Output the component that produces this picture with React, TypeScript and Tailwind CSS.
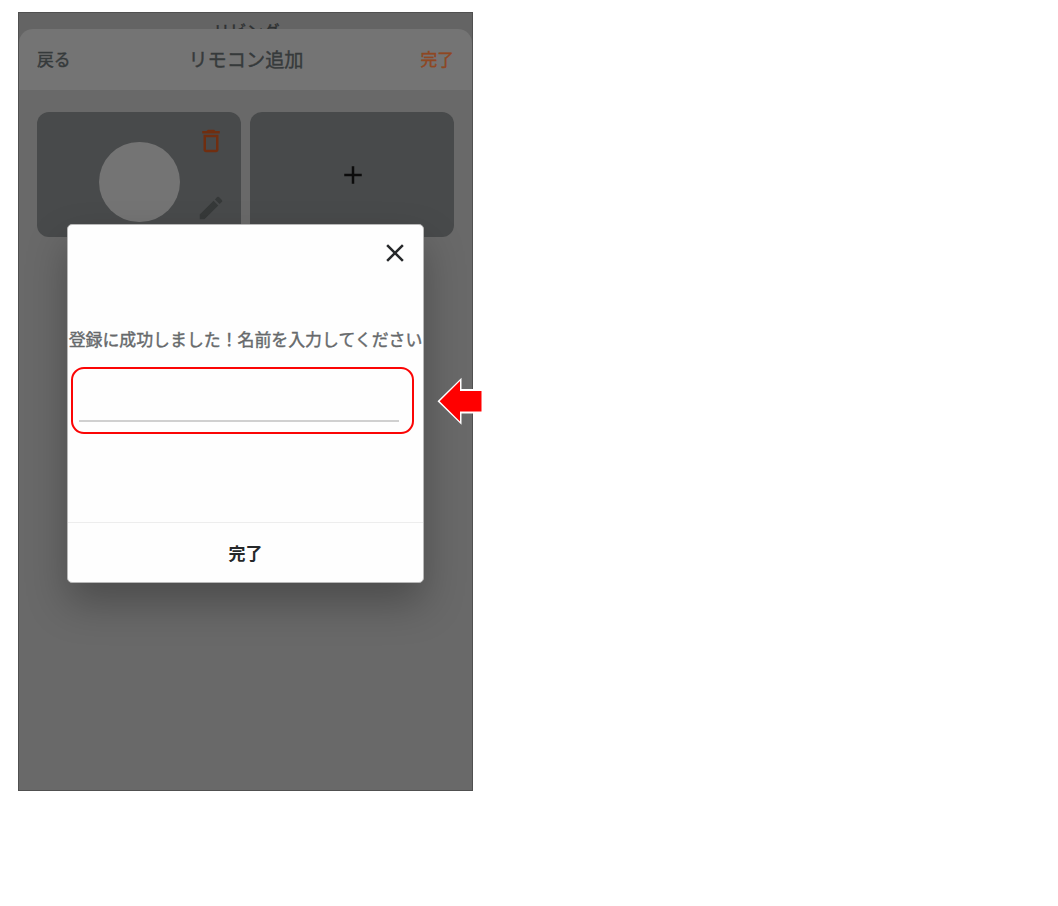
import { MdAdd, MdClose, MdDeleteOutline, MdEdit } from 'react-icons/md';

const Header = () => {
  return (
    <header className="relative flex h-[61px] items-center justify-between rounded-t-[14px] bg-[#747474] px-[18px] text-[16.8px] text-[#363a3b] [-webkit-text-stroke:0.4px]">
      <button>戻る</button>
      <h1 className="pb-px pl-px text-[19.2px]">リモコン追加</h1>
      <button className="text-[#8f4722]">完了</button>
    </header>
  );
};

const RemoteCards = () => {
  return (
    <div className="flex gap-[9px] px-[18px] pt-[22px]">
      <div className="flex h-[125px] w-[204px] rounded-xl bg-[#484a4b]">
        <div className="mt-[29.5px] ml-[61.5px] h-[80.5px] w-[81px] rounded-full bg-[#747474]" />
        <div className="mt-[14px] ml-[16.5px] flex flex-col justify-between pb-[14px]">
          <MdDeleteOutline className="h-[30px] w-[30px] text-[#702e10]" />
          <MdEdit className="h-[30px] w-[30px] text-[#363939]" />
        </div>
      </div>
      <div className="flex h-[125px] w-[204px] items-center justify-center rounded-xl bg-[#484a4b] pl-px">
        <MdAdd className="h-[30px] w-[30px] text-[#0c0c0c]" />
      </div>
    </div>
  );
};

const NameDialog = () => {
  return (
    <div
      role="dialog"
      className="absolute top-[211px] left-[48px] flex h-[359px] w-[357px] flex-col rounded-[5px] border border-[#b8b8b8] bg-[#fefefe] shadow-[0_20px_40px_rgba(0,0,0,0.28)]"
    >
      <button className="mt-[13px] mr-[13px] self-end">
        <MdClose className="h-[30px] w-[30px] text-[#26282a]" />
      </button>
      <p className="-mx-px mt-[59px] text-center text-[16.9px] leading-6 whitespace-nowrap text-[#66696b] [-webkit-text-stroke:0.4px]">
        登録に成功しました！名前を入力してください
      </p>
      <div className="mt-4 ml-[3px] flex h-[67px] w-[343px] flex-col justify-end rounded-[13px] border-2 border-[#fb0505] pr-[13px] pb-[10px] pl-[6px]">
        <input className="h-[42px] w-full border-b-2 border-[#d0d0d0] outline-none" />
      </div>
      <button className="mt-auto h-[60px] border-t border-[#ededed] text-[17px] font-bold text-[#26282a]">
        完了
      </button>
    </div>
  );
};

export default function App() {
  return (
    <div className="h-[906px] w-full bg-white pt-3 pl-[18px] font-['Noto_Sans_CJK_JP',sans-serif]">
      <div className="relative h-[779px] w-[455px] border border-[#505050] bg-[#696969]">
        {/* room title, partly covered by the sheet header */}
        <div className="h-4 bg-[#646464] pt-[6px] pl-[2px] text-center text-[16.6px] leading-6 text-[#2e3132] [-webkit-text-stroke:0.4px]">
          リビング
        </div>
        <div className="bg-[linear-gradient(#646464_50%,#696969_50%)]">
          <Header />
        </div>
        <RemoteCards />
        <NameDialog />
        <svg
          className="absolute top-[363px] left-[418px]"
          width="45"
          height="50"
          viewBox="0 0 45 50"
        >
          <path d="M.5 25.300 24.500 1.800V13H44.500V37.600H24.500V48.800Z" fill="#fff" />
          <path d="M2.700 25.300 23 5V15H44.500V35.600H23V45.600Z" fill="#f00" />
        </svg>
      </div>
    </div>
  );
}
